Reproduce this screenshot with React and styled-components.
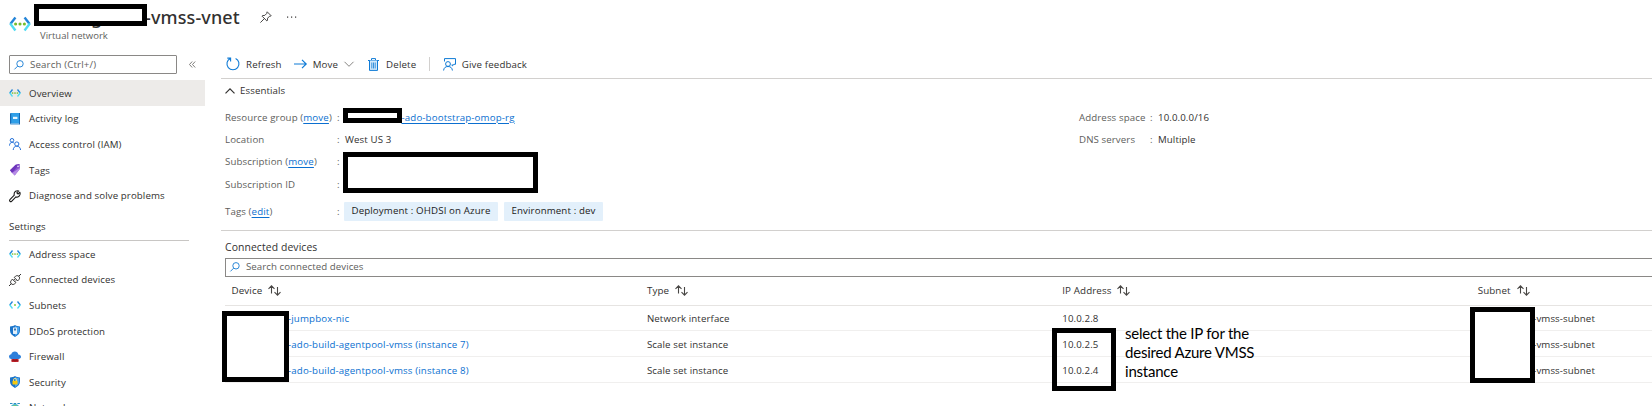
import React from 'react';
import styled, { createGlobalStyle, css } from 'styled-components';

const GlobalStyle = createGlobalStyle`
  *, *::before, *::after { box-sizing: border-box; }
  html, body { margin: 0; padding: 0; background: #fff; overflow: hidden; }
  body { font-family: 'Open Sans', 'Noto Sans', sans-serif; font-size: 9.7px; letter-spacing: 0.1px; color: #323130; }
  svg { display: block; flex: none; overflow: visible; }
`;

const Page = styled.div`
  width: 100%;
  height: 406px;
  display: flex;
  flex-direction: column;
  overflow: hidden;
`;

const Header = styled.header`
  height: 48px;
  flex: none;
  display: flex;
  align-items: flex-start;
  padding-left: 9px;
`;

const HeaderIcon = styled.div`
  width: 31px;
  padding-top: 13px;
`;

const TitleBlock = styled.div`
  position: relative;
`;

const Title = styled.h1`
  margin: 0;
  display: flex;
  align-items: center;
  height: 32px;
  padding-top: 2px;
  font-size: 18px;
  font-weight: 500;
  font-family: 'Noto Sans', 'Open Sans', sans-serif;
  color: #323130;
`;

const HiddenName = styled.span`
  width: 105px;
  flex: none;
  padding-left: 51px;
`;

const TitleText = styled.span`
  letter-spacing: 0.12px;
`;

const Subtitle = styled.div`
  margin-top: -3px;
  line-height: 14px;
  font-size: 9.5px;
  letter-spacing: 0;
  color: #605e5c;
`;

const TitleActions = styled.div`
  display: flex;
  align-items: center;
  gap: 15px;
  padding: 11px 0 0 20px;
`;

const Redaction = styled.div`
  position: absolute;
  left: ${p => p.$x}px;
  top: ${p => p.$y}px;
  width: ${p => p.$w}px;
  height: ${p => p.$h}px;
  border: 5px solid #000;
  background: ${p => (p.$clear ? 'transparent' : '#fff')};
  z-index: 2;
`;

const Body = styled.div`
  flex: 1;
  min-height: 0;
  display: flex;
`;

const Sidebar = styled.nav`
  width: 205px;
  flex: none;
`;

const SearchRow = styled.div`
  display: flex;
  align-items: flex-start;
  gap: 12px;
  padding: 7px 0 0 9px;
  height: 32px;
`;

const SearchBox = styled.div`
  display: flex;
  align-items: center;
  height: 19px;
  gap: 6px;
  padding-left: 4px;
  border: 1px solid #8a8886;
  border-radius: 1px;
  color: #605e5c;
  ${p => p.$wide
    ? css`padding-bottom: 2px; border-right: 0; border-radius: 0; letter-spacing: 0.05px;`
    : css`width: 168px; letter-spacing: 0.15px;`}
`;

const Collapse = styled.div`
  padding-top: 6px;
`;

const NavItem = styled.div`
  display: flex;
  align-items: center;
  gap: 8px;
  height: 25.6px;
  padding: 1px 0 0 9px;
  background: ${p => (p.$active ? '#edebe9' : 'transparent')};
`;

const NavHeading = styled.div`
  height: 33px;
  margin: 0 16px 0 9px;
  padding-top: 12px;
  line-height: 14px;
  border-bottom: 1px solid #c8c6c4;
`;

const Main = styled.main`
  flex: 1;
  min-width: 0;
  margin-left: 16px;
`;

const Toolbar = styled.div`
  height: 31px;
  display: flex;
  align-items: center;
  padding: 2px 0 0 5px;
  letter-spacing: 0.15px;
  border-bottom: 1px solid #d2d0ce;
`;

const Command = styled.div`
  display: flex;
  align-items: center;
  gap: ${p => p.$gap || 6}px;
  margin-right: ${p => p.$after || 0}px;
`;

const Separator = styled.div`
  width: 1px;
  height: 14px;
  background: #d2d0ce;
  margin-right: 13px;
`;

const Essentials = styled.section`
  height: 152px;
  border-bottom: 1px solid #d2d0ce;
`;

const EssentialsHead = styled.div`
  display: flex;
  align-items: center;
  gap: 5px;
  height: 23px;
  padding-left: 4px;
  font-weight: 500;
  font-size: 9.7px;
`;

const Columns = styled.div`
  display: flex;
  padding: 4px 0 0 4px;
`;

const Column = styled.dl`
  margin: 0;
  width: ${p => p.$w}px;
`;

const Property = styled.div`
  position: relative;
  display: flex;
  align-items: center;
  height: ${p => p.$h || 22}px;
`;

const Label = styled.dt`
  width: ${p => p.$w}px;
  color: #605e5c;
  white-space: nowrap;
`;

const Colon = styled.span`
  width: 8px;
  color: #605e5c;
`;

const Value = styled.dd`
  margin: 0;
  display: flex;
  gap: 6px;
  padding-left: ${p => p.$indent || 0}px;
  margin-left: ${p => p.$shift || 0}px;
  white-space: nowrap;
`;

const Link = styled.a`
  color: #0b6fd0;
  letter-spacing: 0.15px;
  text-decoration: ${p => (p.$underline ? 'underline' : 'none')};
  text-underline-offset: 1.5px;
`;

const TagPill = styled.span`
  height: 19px;
  line-height: 18px;
  padding: 0 7.5px;
  background: #e3f0fb;
  color: #1b1a19;
  border-radius: 1px;
  letter-spacing: 0.13px;
`;

const Devices = styled.section`
  padding-left: 4px;
`;

const DevicesTitle = styled.h2`
  margin: 0;
  height: 27px;
  padding-top: 9px;
  line-height: 15px;
  font-size: 10.4px;
  font-weight: 400;
`;

const Row = styled.div`
  position: relative;
  display: grid;
  grid-template-columns: repeat(3, 415.4px) 1fr;
  align-items: center;
  height: ${p => (p.$head ? 28.6 : 25.7)}px;
  padding: ${p => (p.$head ? 0 : 2)}px 0 0 6.5px;
  border-bottom: 1px solid ${p => (p.$head ? '#e6e4e2' : '#f0efee')};
`;

const HeadCell = styled.div`
  display: flex;
  align-items: center;
  gap: 6px;
  font-weight: 500;
  font-size: 9.8px;
`;

const Cell = styled.div`
  white-space: nowrap;
  padding-left: ${p => p.$indent || 0}px;
`;

const Table = styled.div`
  position: relative;
`;

const Note = styled.p`
  position: absolute;
  left: 900px;
  top: 47px;
  width: 140px;
  margin: 0;
  font: 15px/19px Lato, sans-serif;
  letter-spacing: -0.22px;
  color: #000;
  z-index: 3;
`;

const NetIcon = ({ size = 12, dots = 3 }) => (
  <svg width={size} height={size} viewBox="0 0 24 24" fill="none">
    <path d="M7 5 1.5 12" stroke="#2384d8" strokeWidth="2.6" />
    <path d="M1.3 11.5 7 19" stroke="#50dcf2" strokeWidth="2.6" />
    <path d="M17 5l5.5 7" stroke="#2384d8" strokeWidth="2.6" />
    <path d="M22.7 11.5 17 19" stroke="#50dcf2" strokeWidth="2.6" />
    {dots === 1
      ? <circle cx="12" cy="12" r="2" fill="#86c83b" />
      : [7.2, 12, 16.8].map(x => <circle key={x} cx={x} cy="12" r="1.7" fill="#76bc2d" />)}
  </svg>
);

const BookIcon = () => (
  <svg width="12" height="12" viewBox="0 0 12 12">
    <path d="M2 0h9v11.5H2a1 1 0 0 1-1-1V1a1 1 0 0 1 1-1z" fill="#1568b4" />
    <path d="M2.2 0H10v10.6H2.2z" fill="#2f9fe8" />
    <path d="M1.4 10.6H10v.9H2z" fill="#b7dcf5" />
    <rect x="4" y="3.8" width="4.4" height="2.2" fill="#e8f6ff" />
  </svg>
);

const PeopleIcon = () => (
  <svg width="12" height="12" viewBox="0 0 12 12" fill="none" stroke="#2672d9" strokeWidth="1">
    <circle cx="3" cy="2.3" r="1.8" />
    <path d="M.5 7.6C.6 5.4 1.6 4.4 3.2 4.4c.8 0 1.4.3 1.9.8" />
    <circle cx="7.8" cy="6" r="2.1" />
    <path d="M4.2 12c.2-2.5 1.4-3.8 3.6-3.8s3.5 1.3 3.8 3.8" />
  </svg>
);

const TagIcon = () => (
  <svg width="12" height="12" viewBox="0 0 12 12">
    <path d="M1 6.3 6.7.7 10.6 0l.4 4.8-5.3 6.8z" fill="#8a52cf" />
    <path d="M1 6.3 6.7.7l3.9-.7L3 8.9z" fill="#6d35bb" />
    <path d="M3.1 8.9 5.7 11.6 11 4.8l-.1-1z" fill="#b58be5" />
    <circle cx="9" cy="2.2" r=".8" fill="#fff" />
  </svg>
);

const WrenchIcon = () => (
  <svg width="12" height="12" viewBox="0 0 12 12" fill="none" stroke="#1b1a19" strokeWidth="1.1" strokeLinejoin="round">
    <path d="M10.9 2.2 9.1 4 7.8 2.8 9.7.9C7.6.2 5 1.5 5.1 4.2c0 .4.1.7.2 1L.9 9.6c-1 1.2.5 2.7 1.7 1.7l4.3-4.4c2.8.9 5.2-1.8 4-4.7z" />
  </svg>
);

const PlugIcon = () => (
  <svg width="12" height="12" viewBox="0 0 12 12" fill="none" stroke="#323130" strokeWidth="1">
    <path d="M0 12l2.3-2.3M9.7 2.3 12 0" />
    <path d="M3.4 5.1 6.9 8.6 5.6 9.8c-1 .9-2.4.9-3.3 0s-1-2.3 0-3.3z" />
    <path d="M5.2 3.4 8.7 6.9l1.2-1.3c.9-1 .9-2.4 0-3.3s-2.4-.9-3.3 0z" />
    <path d="M4.6 6.3 5.8 5M5.9 7.6l1.2-1.2" />
  </svg>
);

const ShieldIcon = ({ lock }) => (
  <svg width="12" height="12" viewBox="0 0 12 12">
    <path d="M6 0c1.5 1 3 1.4 5 1.4v4.2C11 8.7 8.5 10.8 6 12 3.5 10.8 1 8.7 1 5.6V1.4C3 1.4 4.5 1 6 0z" fill="#1b74c9" />
    <path d="M6 1c1.3.8 2.6 1.1 4.2 1.2v3.4c0 2.5-2 4.3-4.2 5.4z" fill="#4aa5ee" />
    {lock ? (
      <g>
        <path d="M4.5 5V3.9a1.5 1.5 0 0 1 3 0V5" fill="none" stroke="#ffe27a" strokeWidth=".9" />
        <rect x="3.5" y="4.7" width="5" height="3.7" rx=".4" fill="#f7c80e" />
      </g>
    ) : (
      <g>
        <rect x="4" y="2.5" width="4" height="6.5" rx=".4" fill="#e3eef8" />
        <rect x="5.2" y="3.5" width="1.6" height="2" fill="#165a9c" />
      </g>
    )}
  </svg>
);

const FirewallIcon = () => (
  <svg width="12" height="12" viewBox="0 0 12 12">
    <rect x="2.5" y="6" width="7" height="5" fill="#c3222b" />
    <path d="M2.5 9.5h7M4.8 8v1.500M7.2 8v1.500M6 9.500v1.500" stroke="#7d1118" strokeWidth=".5" />
    <path d="M2.6 8A2.5 2.5 0 0 1 0 5.700c0-1.400 1-2.300 2.300-2.400C2.700 1.500 4 .5 5.800.5c1.900 0 3.200 1.200 3.500 2.900 1.600.1 2.700 1 2.700 2.400C12 7.100 10.900 8 9.500 8z" fill="#2d7fda" />
  </svg>
);

const GlobeIcon = () => (
  <svg width="12" height="12" viewBox="0 0 12 12">
    <path d="M1 1.5h10" stroke="#2b8fc4" strokeWidth="1" strokeDasharray="2.5 1.2" />
    <circle cx="6" cy="7" r="5" fill="#46b6d8" />
    <path d="M2 5.2C4 2.5 8 2.5 10 5.2v2H2z" fill="#8ccc4b" />
  </svg>
);

const SearchIcon = () => (
  <svg width="10" height="10" viewBox="0 0 10 10" fill="none" stroke="#2b88d8" strokeWidth="1">
    <circle cx="6" cy="3.8" r="3.2" />
    <path d="M3.7 6.1.4 9.4" />
  </svg>
);

const CollapseIcon = () => (
  <svg width="7" height="7" viewBox="0 0 7 7" fill="none" stroke="#605e5c" strokeWidth=".8">
    <path d="M3.2.5l-2.7 3 2.7 3M6.2.5l-2.7 3 2.7 3" />
  </svg>
);

const PinIcon = () => (
  <svg width="12" height="12" viewBox="0 0 12 12" fill="none" stroke="#323130" strokeWidth=".9">
    <path d="M7.2.8 11.2 4.8 10.4 5.2 9.7 5.1 7.6 7.2 7.4 9.5 6.8 9.9 2.1 5.2 2.5 4.6 4.8 4.4 6.9 2.3 6.8 1.5zM4.3 7.7.4 11.6" />
  </svg>
);

const MoreIcon = () => (
  <svg width="10" height="2" viewBox="0 0 10 2" fill="#323130">
    <rect x="0" y=".5" width="1.2" height="1.2" />
    <rect x="4" y=".5" width="1.2" height="1.2" />
    <rect x="8" y=".5" width="1.2" height="1.2" />
  </svg>
);

const RefreshIcon = () => (
  <svg width="14" height="14" viewBox="0 0 14 14" fill="none" stroke="#0f7bd6" strokeWidth="1.1">
    <path d="M9.6 1.4A6 6 0 1 1 4.3 1.4M1.3 1.1h3.3v3.3" />
  </svg>
);

const ArrowIcon = () => (
  <svg width="13" height="10" viewBox="0 0 13 10" fill="none" stroke="#0f7bd6" strokeWidth="1.2">
    <path d="M0 5h12M8 .8 12.2 5 8 9.2" />
  </svg>
);

const ChevronIcon = ({ up }) => (
  <svg width="10" height="6" viewBox="0 0 10 6" fill="none" stroke={up ? '#323130' : '#797775'} strokeWidth={up ? 1.2 : 0.9}>
    <path d={up ? 'M.5 5.3 5 .8l4.5 4.5' : 'M.5.8 5 5.3 9.5.8'} />
  </svg>
);

const TrashIcon = () => (
  <svg width="11" height="13" viewBox="0 0 11 13" fill="none" stroke="#0f7bd6" strokeWidth="1">
    <path d="M0 2.5h11M3.5 2.3V.6h4v1.7" />
    <path d="M1.5 2.5v9.9h8V2.5" fill="#d3e9fa" />
    <path d="M3.8 4.5v6M5.5 4.5v6M7.2 4.5v6" strokeWidth=".8" />
  </svg>
);

const FeedbackIcon = () => (
  <svg width="13" height="13" viewBox="0 0 13 13" fill="none" stroke="#0f7bd6" strokeWidth="1">
    <circle cx="5" cy="6" r="2.4" />
    <path d="M.6 12.5c.2-2.6 1.8-4 4.4-4s4.2 1.4 4.4 4M1.5 3.5V.6h11v5.7H11L9.2 8V6.3" />
  </svg>
);

const SortIcon = () => (
  <svg width="14" height="11" viewBox="0 0 14 11" fill="none" stroke="#484644" strokeWidth="1.1">
    <path d="M3.500 8.500V.8M.5 3.800l3-3 3 3M9.500 2v8M6.500 7.200l3 3 3-3" />
  </svg>
);

const mainItems = [
  ['Overview', <NetIcon />],
  ['Activity log', <BookIcon />],
  ['Access control (IAM)', <PeopleIcon />],
  ['Tags', <TagIcon />],
  ['Diagnose and solve problems', <WrenchIcon />],
];

const settingsItems = [
  ['Address space', <NetIcon />],
  ['Connected devices', <PlugIcon />],
  ['Subnets', <NetIcon dots={1} />],
  ['DDoS protection', <ShieldIcon />],
  ['Firewall', <FirewallIcon />],
  ['Security', <ShieldIcon lock />],
  ['Network manager', <GlobeIcon />],
];

const devices = [
  ['-jumpbox-nic', 'Network interface', '10.0.2.8'],
  ['-ado-build-agentpool-vmss (instance 7)', 'Scale set instance', '10.0.2.5'],
  ['-ado-build-agentpool-vmss (instance 8)', 'Scale set instance', '10.0.2.4'],
];

export default function App() {
  return (
    <Page>
      <GlobalStyle />
      <Header>
        <HeaderIcon><NetIcon size={22} /></HeaderIcon>
        <TitleBlock>
          <Title>
            <HiddenName>g</HiddenName>
            <TitleText>-vmss-vnet</TitleText>
          </Title>
          <Subtitle>Virtual network</Subtitle>
          <Redaction $x={-6} $y={4} $w={113} $h={22} />
        </TitleBlock>
        <TitleActions>
          <PinIcon />
          <MoreIcon />
        </TitleActions>
      </Header>
      <Body>
        <Sidebar>
          <SearchRow>
            <SearchBox><SearchIcon />Search (Ctrl+/)</SearchBox>
            <Collapse><CollapseIcon /></Collapse>
          </SearchRow>
          {mainItems.map(([name, icon], i) => (
            <NavItem key={name} $active={i === 0}>{icon}{name}</NavItem>
          ))}
          <NavHeading>Settings</NavHeading>
          {settingsItems.map(([name, icon]) => (
            <NavItem key={name}>{icon}{name}</NavItem>
          ))}
        </Sidebar>
        <Main>
          <Toolbar>
            <Command $after={12}><RefreshIcon />Refresh</Command>
            <Command $after={14}><ArrowIcon />Move<ChevronIcon /></Command>
            <Command $gap={7} $after={12.5}><TrashIcon />Delete</Command>
            <Separator />
            <Command><FeedbackIcon />Give feedback</Command>
          </Toolbar>
          <Essentials>
            <EssentialsHead><ChevronIcon up />Essentials</EssentialsHead>
            <Columns>
              <Column $w={854}>
                <Property>
                  <Label $w={112}>Resource group (<Link $underline>move</Link>)</Label>
                  <Colon>:</Colon>
                  <Value $indent={56.5}><Link $underline>-ado-bootstrap-omop-rg</Link></Value>
                  <Redaction $x={118} $y={2} $w={59} $h={15} />
                </Property>
                <Property>
                  <Label $w={112}>Location</Label>
                  <Colon>:</Colon>
                  <Value>West US 3</Value>
                </Property>
                <Property $h={23}>
                  <Label $w={112}>Subscription (<Link $underline>move</Link>)</Label>
                  <Colon>:</Colon>
                  <Redaction $x={118} $y={2} $w={195} $h={41} />
                </Property>
                <Property>
                  <Label $w={112}>Subscription ID</Label>
                  <Colon>:</Colon>
                </Property>
                <Property $h={32}>
                  <Label $w={112}>Tags (<Link $underline>edit</Link>)</Label>
                  <Colon>:</Colon>
                  <Value $shift={-1}>
                    <TagPill>Deployment : OHDSI on Azure</TagPill>
                    <TagPill>Environment : dev</TagPill>
                  </Value>
                </Property>
              </Column>
              <Column $w={300}>
                <Property>
                  <Label $w={71}>Address space</Label>
                  <Colon>:</Colon>
                  <Value>10.0.0.0/16</Value>
                </Property>
                <Property>
                  <Label $w={71}>DNS servers</Label>
                  <Colon>:</Colon>
                  <Value>Multiple</Value>
                </Property>
              </Column>
            </Columns>
          </Essentials>
          <Devices>
            <DevicesTitle>Connected devices</DevicesTitle>
            <SearchBox $wide><SearchIcon />Search connected devices</SearchBox>
            <Table>
              <Row $head>
                {['Device', 'Type', 'IP Address', 'Subnet'].map(name => (
                  <HeadCell key={name}>{name}<SortIcon /></HeadCell>
                ))}
              </Row>
              {devices.map(([name, type, ip]) => (
                <Row key={ip}>
                  <Cell $indent={56.5}><Link>{name}</Link></Cell>
                  <Cell>{type}</Cell>
                  <Cell>{ip}</Cell>
                  <Cell $indent={55.5}>-vmss-subnet</Cell>
                </Row>
              ))}
              <Redaction $x={-3} $y={34} $w={67} $h={71} />
              <Redaction $x={827} $y={51} $w={64} $h={63} $clear />
              <Redaction $x={1245} $y={30} $w={65} $h={76} />
              <Note>select the IP for the desired Azure VMSS instance</Note>
            </Table>
          </Devices>
        </Main>
      </Body>
    </Page>
  );
}
